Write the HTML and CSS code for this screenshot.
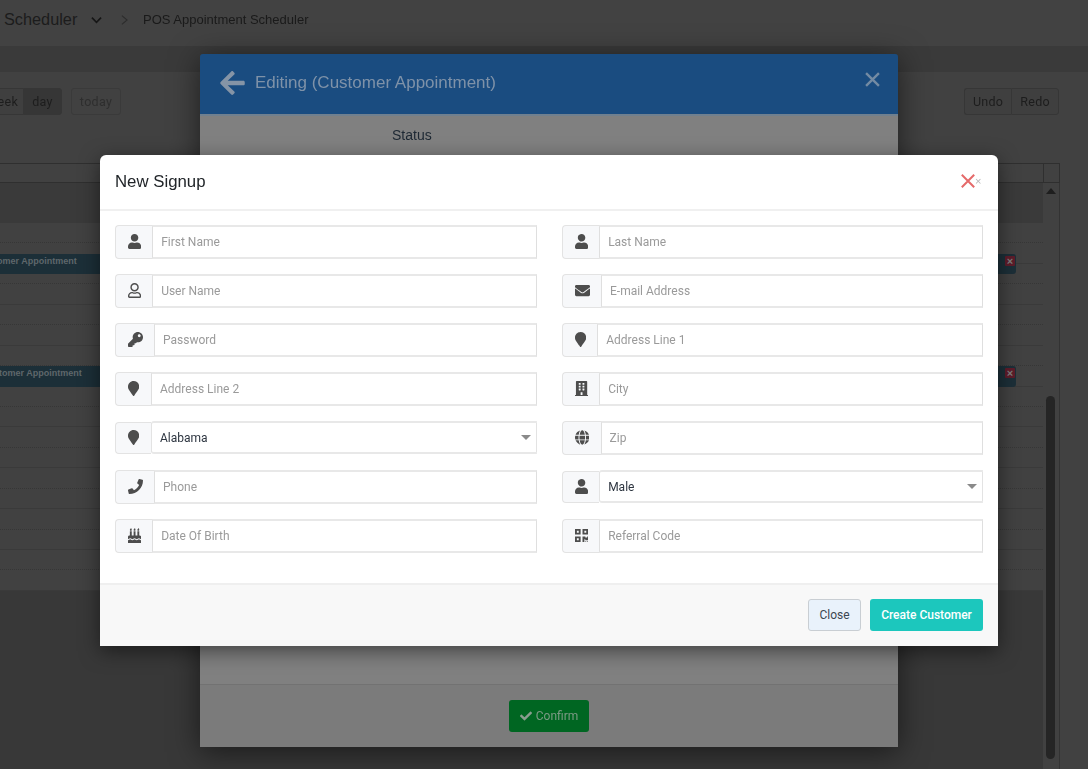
FILE: index.html
```html
<!DOCTYPE html>
<html lang="en">
<head>
<meta charset="utf-8">
<title>POS Appointment Scheduler</title>
<link rel="stylesheet" href="styles.css">
</head>
<body>
<svg class="defs" aria-hidden="true">
  <defs>
    <path id="i-user" d="M224 256c70.7 0 128-57.3 128-128S294.7 0 224 0 96 57.3 96 128s57.3 128 128 128zm89.6 32h-16.7c-22.2 10.2-46.9 16-72.9 16s-50.6-5.8-72.9-16h-16.7C60.2 288 0 348.2 0 422.4V464c0 26.5 21.5 48 48 48h352c26.5 0 48-21.5 48-48v-41.6c0-74.2-60.2-134.4-134.4-134.4z"/>
    <path id="i-user-o" d="M313.6 304c-28.7 0-42.5 16-89.6 16-47.1 0-60.8-16-89.6-16C60.2 304 0 364.2 0 438.4V464c0 26.5 21.5 48 48 48h352c26.5 0 48-21.5 48-48v-25.6c0-74.2-60.2-134.4-134.4-134.4zM400 464H48v-25.6c0-47.6 38.8-86.4 86.4-86.4 14.6 0 38.3 16 89.6 16 51.7 0 74.9-16 89.6-16 47.6 0 86.4 38.8 86.4 86.4V464zM224 288c79.5 0 144-64.5 144-144S303.5 0 224 0 80 64.5 80 144s64.5 144 144 144zm0-240c52.9 0 96 43.1 96 96s-43.1 96-96 96-96-43.1-96-96 43.1-96 96-96z"/>
    <path id="i-key" d="M512 176.001C512 273.203 433.202 352 336 352c-11.22 0-22.19-1.062-32.827-3.069l-24.012 27.014A23.999 23.999 0 0 1 261.223 384H224v40c0 13.255-10.745 24-24 24h-40v40c0 13.255-10.745 24-24 24H24c-13.255 0-24-10.745-24-24v-78.059c0-6.365 2.529-12.47 7.029-16.971l161.802-161.802C163.108 213.814 160 195.271 160 176 160 78.798 238.797.001 335.999 0 433.488-.001 512 78.511 512 176.001zM336 128c0 26.51 21.49 48 48 48s48-21.49 48-48-21.49-48-48-48-48 21.49-48 48z"/>
    <path id="i-pin" d="M172.268 501.67C26.97 291.031 0 269.413 0 192 0 85.961 85.961 0 192 0s192 85.961 192 192c0 77.413-26.97 99.031-172.268 309.67-9.535 13.774-29.93 13.773-39.464 0z"/>
    <path id="i-mail" d="M502.3 190.8c3.9-3.1 9.7-.2 9.7 4.7V400c0 26.5-21.5 48-48 48H48c-26.5 0-48-21.5-48-48V195.6c0-5 5.7-7.8 9.7-4.7 22.4 17.4 52.1 39.5 154.1 113.6 21.1 15.4 56.7 47.8 92.2 47.6 35.7.3 72-32.8 92.3-47.6 102-74.1 131.6-96.3 154-113.7zM256 320c23.2.4 56.6-29.2 73.4-41.4 132.7-96.3 142.8-104.7 173.4-128.7 5.8-4.5 9.2-11.5 9.2-18.9v-19c0-26.5-21.5-48-48-48H48C21.5 64 0 85.5 0 112v19c0 7.4 3.4 14.3 9.2 18.9 30.6 23.9 40.7 32.4 173.4 128.7 16.8 12.2 50.2 41.8 73.4 41.4z"/>
    <path id="i-building" d="M436 480h-20V24c0-13.255-10.745-24-24-24H56C42.745 0 32 10.745 32 24v456H12c-6.627 0-12 5.373-12 12v20h448v-20c0-6.627-5.373-12-12-12zM128 76c0-6.627 5.373-12 12-12h40c6.627 0 12 5.373 12 12v40c0 6.627-5.373 12-12 12h-40c-6.627 0-12-5.373-12-12V76zm0 96c0-6.627 5.373-12 12-12h40c6.627 0 12 5.373 12 12v40c0 6.627-5.373 12-12 12h-40c-6.627 0-12-5.373-12-12v-40zm52 148h-40c-6.627 0-12-5.373-12-12v-40c0-6.627 5.373-12 12-12h40c6.627 0 12 5.373 12 12v40c0 6.627-5.373 12-12 12zm76 160h-64v-84c0-6.627 5.373-12 12-12h40c6.627 0 12 5.373 12 12v84zm64-172c0 6.627-5.373 12-12 12h-40c-6.627 0-12-5.373-12-12v-40c0-6.627 5.373-12 12-12h40c6.627 0 12 5.373 12 12v40zm0-96c0 6.627-5.373 12-12 12h-40c-6.627 0-12-5.373-12-12v-40c0-6.627 5.373-12 12-12h40c6.627 0 12 5.373 12 12v40zm0-96c0 6.627-5.373 12-12 12h-40c-6.627 0-12-5.373-12-12V76c0-6.627 5.373-12 12-12h40c6.627 0 12 5.373 12 12v40z"/>
    <path id="i-globe" d="M336.5 160C322 70.7 287.8 8 248 8s-74 62.7-88.5 152h177zM152 256c0 22.2 1.2 43.5 3.3 64h185.3c2.1-20.5 3.3-41.8 3.3-64s-1.2-43.5-3.3-64H155.3c-2.1 20.5-3.3 41.8-3.3 64zm324.7-96c-28.6-67.9-86.5-120.4-158-141.6 24.4 33.8 41.2 84.7 50 141.6h108zM177.2 18.4C105.8 39.6 47.8 92.1 19.3 160h108c8.7-56.9 25.5-107.8 49.9-141.6zM487.4 192H372.7c2.1 21 3.3 42.5 3.3 64s-1.2 43-3.3 64h114.6c5.5-20.5 8.6-41.8 8.6-64s-3.1-43.5-8.5-64zM120 256c0-21.5 1.2-43 3.3-64H8.6C3.2 212.5 0 233.8 0 256s3.2 43.5 8.6 64h114.6c-2-21-3.2-42.5-3.2-64zm39.5 96c14.5 89.3 48.7 152 88.5 152s74-62.7 88.5-152h-177zm159.3 141.6c71.4-21.2 129.4-73.7 158-141.6h-108c-8.8 56.9-25.6 107.8-50 141.6zM19.3 352c28.6 67.9 86.5 120.4 158 141.6-24.4-33.8-41.2-84.7-50-141.6h-108z"/>
    <path id="i-phone" d="M493.4 24.6l-104-24c-11.3-2.6-22.9 3.3-27.5 13.9l-48 112c-4.2 9.8-1.4 21.3 6.9 28l60.6 49.6c-36 76.7-98.9 140.5-177.2 177.2l-49.6-60.6c-6.8-8.3-18.2-11.1-28-6.9l-112 48C3.9 366.5-2 378.1.6 389.4l24 104C27.1 504.2 36.7 512 48 512c256.1 0 464-207.5 464-464 0-11.2-7.7-20.9-18.6-23.4z"/>
    <path id="i-cake" d="M448 384c-28.02 0-31.26-32-74.5-32-43.43 0-46.825 32-74.75 32-27.695 0-31.454-32-74.75-32-42.842 0-47.218 32-74.5 32-28.148 0-31.202-32-74.75-32-43.547 0-46.653 32-74.75 32v-80c0-26.5 21.5-48 48-48h16V112h64v144h64V112h64v144h64V112h64v144h16c26.5 0 48 21.5 48 48v80zm0 128H0v-96c43.356 0 46.767-32 74.75-32 27.951 0 31.253 32 74.75 32 42.843 0 47.217-32 74.5-32 28.148 0 31.201 32 74.75 32 43.357 0 46.767-32 74.75-32 27.488 0 31.252 32 74.5 32v96zM96 96c-17.75 0-32-14.25-32-32 0-31 32-23 32-64 12 0 32 29.5 32 56s-14.25 40-32 40zm128 0c-17.75 0-32-14.25-32-32 0-31 32-23 32-64 12 0 32 29.5 32 56s-14.25 40-32 40zm128 0c-17.75 0-32-14.25-32-32 0-31 32-23 32-64 12 0 32 29.5 32 56s-14.25 40-32 40z"/>
    <path id="i-qr" d="M0 224h192V32H0v192zM64 96h64v64H64V96zm192-64v192h192V32H256zm128 128h-64V96h64v64zM0 480h192V288H0v192zm64-128h64v64H64v-64zm352-64h32v128h-96v-32h-32v96h-64V288h96v32h64v-32zm0 160h32v32h-32v-32zm-64 0h32v32h-32v-32z"/>
  </defs>
</svg>

<div class="page">
  <header class="topbar">
    <span class="app-name">Scheduler</span>
    <svg class="chev" viewBox="0 0 12 8"><path d="M1 1.5 6 6.5 11 1.5"/></svg>
    <svg class="crumb-sep" viewBox="0 0 8 12"><path d="M1 1 7 6 1 11"/></svg>
    <span class="crumb">POS Appointment Scheduler</span>
  </header>
  <div class="subbar"></div>
  <div class="toolbar">
    <div class="tools-left">
      <div class="btn-group week-group">
        <button class="tool-btn clip-week">week</button>
        <button class="tool-btn active">day</button>
      </div>
      <button class="tool-btn muted">today</button>
    </div>
    <div class="btn-group">
      <button class="tool-btn">Undo</button>
      <button class="tool-btn">Redo</button>
    </div>
  </div>
  <div class="cal">
    <div class="cal-head"><div class="cal-head-main"></div><div class="cal-head-corner"></div></div>
    <div class="cal-main">
      <div class="cal-grid">
        <div class="cal-band"></div>
        <div class="cal-rows">
          <div class="slot"></div><div class="slot"></div><div class="slot"></div><div class="slot"></div><div class="slot"></div><div class="slot"></div>
          <div class="slot"></div><div class="slot"></div><div class="slot"></div><div class="slot"></div><div class="slot"></div><div class="slot"></div>
          <div class="slot"></div><div class="slot"></div><div class="slot"></div><div class="slot"></div><div class="slot"></div><div class="slot"></div>
          <div class="event event-a"><span>Customer Appointment</span><i class="event-x">×</i></div>
          <div class="event event-b"><span>Customer Appointment</span><i class="event-x">×</i></div>
        </div>
        <div class="cal-foot"></div>
      </div>
      <div class="cal-scroll">
        <div class="scroll-up"></div>
        <div class="scroll-thumb"></div>
      </div>
    </div>
  </div>
</div>

<section class="edit-modal">
  <div class="edit-head">
    <svg class="edit-back" viewBox="0 0 448 512"><path d="M257.5 445.1l-22.2 22.2c-9.4 9.4-24.6 9.4-33.9 0L7 273c-9.4-9.4-9.4-24.6 0-33.9L201.4 44.7c9.4-9.4 24.6-9.4 33.9 0l22.2 22.2c9.5 9.5 9.3 25-.4 34.3L136.6 216H424c13.3 0 24 10.7 24 24v32c0 13.3-10.7 24-24 24H136.6l120.5 114.8c9.8 9.3 10 24.8.4 34.3z"/></svg>
    <h2 class="edit-title">Editing (Customer Appointment)</h2>
    <svg class="edit-close" viewBox="0 0 14 14"><path d="M1 1 13 13M13 1 1 13"/></svg>
  </div>
  <div class="edit-body"><span class="edit-label">Status</span></div>
  <div class="edit-foot">
    <button class="confirm">
      <svg viewBox="0 0 512 512"><path d="M173.898 439.404l-166.4-166.4c-9.997-9.997-9.997-26.206 0-36.204l36.203-36.204c9.997-9.998 26.207-9.998 36.204 0L192 312.69 432.095 72.596c9.997-9.997 26.207-9.997 36.204 0l36.203 36.204c9.997 9.997 9.997 26.206 0 36.204l-294.4 294.401c-9.998 9.997-26.207 9.997-36.204-.001z"/></svg>
      Confirm
    </button>
  </div>
</section>

<section class="signup-modal">
  <div class="signup-head">
    <h2 class="signup-title">New Signup</h2>
    <div class="signup-close">
      <svg viewBox="0 0 14 14"><path d="M.8.8 13.2 13.2M13.2.8.8 13.2"/></svg>
      <span class="close-x">×</span>
    </div>
  </div>
  <form class="signup-body">
    <div class="field"><span class="addon"><svg viewBox="0 0 448 512"><use href="#i-user"/></svg></span><input placeholder="First Name"></div>
    <div class="field"><span class="addon"><svg viewBox="0 0 448 512"><use href="#i-user"/></svg></span><input placeholder="Last Name"></div>
    <div class="field"><span class="addon"><svg viewBox="0 0 448 512"><use href="#i-user-o"/></svg></span><input placeholder="User Name"></div>
    <div class="field"><span class="addon"><svg viewBox="0 0 512 512"><use href="#i-mail"/></svg></span><input placeholder="E-mail Address"></div>
    <div class="field"><span class="addon"><svg viewBox="0 0 512 512"><use href="#i-key"/></svg></span><input placeholder="Password"></div>
    <div class="field"><span class="addon"><svg viewBox="0 0 384 512"><use href="#i-pin"/></svg></span><input placeholder="Address Line 1"></div>
    <div class="field"><span class="addon addon-wide"><svg viewBox="0 0 384 512"><use href="#i-pin"/></svg></span><input placeholder="Address Line 2"></div>
    <div class="field"><span class="addon"><svg viewBox="0 0 448 512"><use href="#i-building"/></svg></span><input placeholder="City"></div>
    <div class="field field-select"><span class="addon addon-wide"><svg viewBox="0 0 384 512"><use href="#i-pin"/></svg></span><div class="select-wrap"><select><option>Alabama</option></select></div></div>
    <div class="field"><span class="addon"><svg viewBox="0 0 496 512"><use href="#i-globe"/></svg></span><input placeholder="Zip"></div>
    <div class="field"><span class="addon"><svg viewBox="0 0 512 512"><use href="#i-phone"/></svg></span><input placeholder="Phone"></div>
    <div class="field field-select"><span class="addon"><svg viewBox="0 0 448 512"><use href="#i-user"/></svg></span><div class="select-wrap"><select><option>Male</option></select></div></div>
    <div class="field"><span class="addon"><svg viewBox="0 0 448 512"><use href="#i-cake"/></svg></span><input placeholder="Date Of Birth"></div>
    <div class="field"><span class="addon"><svg viewBox="0 0 448 512"><use href="#i-qr"/></svg></span><input placeholder="Referral Code"></div>
  </form>
  <div class="signup-foot">
    <button class="btn-close">Close</button>
    <button class="btn-create">Create Customer</button>
  </div>
</section>
</body>
</html>
```

FILE: styles.css
```css
* { box-sizing: border-box; }
html, body { margin: 0; height: 100%; overflow: hidden; }
body { background: #414141; font-family: Roboto, "Liberation Sans", sans-serif; color: #222; }
.defs { display: none; }
button { font-family: inherit; }

/* Dimmed page behind the dialogs */
.page { height: 769px; display: flex; flex-direction: column; overflow: hidden; filter: blur(.5px); }
.topbar { height: 46px; display: flex; align-items: center; padding-left: 4px; background: #424242; flex: none; padding-bottom: 7px; }
.app-name { font-family: "Liberation Sans", sans-serif; font-size: 16.3px; color: #1c1c1c; width: 87px; }
.chev { width: 11px; height: 8px; fill: none; stroke: #161616; stroke-width: 1.8; }
.crumb-sep { width: 7px; height: 12px; margin-left: 19px; fill: none; stroke: #2c2c2c; stroke-width: 1.2; }
.crumb { margin-left: 15px; font-family: "Liberation Sans", sans-serif; font-size: 13px; color: #1a1a1a; }
.subbar { height: 26px; background: #3a3a3a; flex: none; }
.toolbar { height: 91px; flex: none; display: flex; justify-content: space-between; align-items: flex-start; padding: 16px 29px 0 0; }
.tools-left { display: flex; gap: 9px; margin-left: -21px; }
.btn-group { display: flex; }
.tool-btn { height: 27px; padding: 0 8px; border: 1px solid #363636; background: #3f3f3f; color: #1d1d1d; font-size: 12.5px; letter-spacing: .3px; border-radius: 3px; }
.btn-group .tool-btn:not(:last-child) { border-top-right-radius: 0; border-bottom-right-radius: 0; border-right: 0; }
.btn-group .tool-btn:not(:first-child) { border-top-left-radius: 0; border-bottom-left-radius: 0; }
.tool-btn.active { background: #363636; width: 39px; padding: 0; }
.clip-week { width: 44px; padding: 0 0 0 3px; }
.tool-btn.muted { color: #2e2e2e; background: #414141; width: 50px; padding: 0; border-color: #3a3a3a; }

.cal { flex: 1; display: flex; flex-direction: column; width: 1060px; min-height: 0; }
.cal-head { height: 20px; flex: none; display: flex; border-top: 1px solid #2f2f2f; border-bottom: 1px solid #2f2f2f; }
.cal-head-main { flex: 1; }
.cal-head-corner { width: 17px; border-left: 1px solid #2f2f2f; border-right: 1px solid #2f2f2f; }
.cal-main { flex: 1; display: flex; min-height: 0; }
.cal-grid { flex: 1; display: flex; flex-direction: column; min-width: 0; }
.cal-band { height: 40px; background: #3a3a3a; flex: none; }
.cal-rows { position: relative; flex: none; }
.slot { height: 20.45px; }
.slot:nth-child(odd) { border-bottom: 1px dotted #363636; }
.slot:nth-child(even) { border-bottom: 1px solid #3a3a3a; }
.cal-foot { flex: 1; background: #383838; }
.cal-scroll { width: 17px; flex: none; border-right: 1px solid #333; padding: 5px 0 0 3px; }
.scroll-up { width: 0; height: 0; border: 5px solid transparent; border-top: 0; border-bottom: 6px solid #1e1e1e; }
.scroll-thumb { width: 9px; height: 363px; margin-top: 202px; border-radius: 5px; background: #252525; }
.event { position: absolute; left: -30px; right: 27px; height: 20px; display: flex; justify-content: space-between; background: #1c2f38; border-radius: 3px; padding: 0 1px 0 7px; }
.event span { font: bold 9px/14px "Liberation Sans", sans-serif; color: #5f676b; }
.event-a { top: 31px; }
.event-b { top: 143px; height: 21px; left: -25px; }
.event-x { width: 10px; height: 10px; margin-top: 2px; background: #5e1c2a; border-radius: 1px; color: #7d7d7d; font: bold 11px/10px "Liberation Sans", sans-serif; text-align: center; }

/* Editing dialog */
.edit-modal { position: absolute; left: 200px; top: 54px; width: 698px; height: 693px; display: flex; flex-direction: column; box-shadow: 0 5px 30px rgba(0,0,0,.55); border-radius: 3px 3px 0 0; }
.edit-head { height: 62px; flex: none; display: flex; align-items: center; padding: 0 18px 2px 20px; background: #1a4c80; border-bottom: 2px solid #70808f; border-radius: 3px 3px 0 0; }
.edit-back { height: 28px; fill: #8594a6; flex: none; width: 25px; filter: blur(.4px); }
.edit-title { flex: 1; margin: 0 0 0 10px; font: 400 17px "Liberation Sans", sans-serif; color: #7f92a8; filter: blur(.4px); }
.edit-close { width: 15px; height: 15px; margin-top: -8px; fill: none; stroke: #748ba3; stroke-width: 2.2; filter: blur(.4px); }
.edit-body { flex: 1; background: #808080; padding: 11px 0 0 192px; line-height: 1; }
.edit-label { font: 14px/1 "Liberation Sans", sans-serif; color: #1d2833; filter: blur(.4px); display: inline-block; }
.edit-foot { height: 63px; flex: none; background: #7b7b7b; border-top: 1px solid #727272; display: flex; justify-content: center; padding-top: 15px; }
.confirm { width: 80px; height: 32px; border: 0; border-radius: 3px; background: #006622; color: #7b9a85; font-size: 12px; display: flex; align-items: center; justify-content: center; gap: 4px; padding: 0; filter: blur(.3px); }
.confirm svg { width: 12px; height: 12px; fill: #8a9d90; }

/* New Signup dialog */
.signup-modal { position: absolute; left: 100px; top: 155px; width: 898px; height: 491px; display: flex; flex-direction: column; background: #fff; border-radius: 6px 6px 0 0; box-shadow: 0 5px 20px rgba(0,0,0,.5); }
.signup-head { height: 56px; flex: none; display: flex; align-items: center; justify-content: space-between; padding: 0 17px 0 15px; border-bottom: 2px solid #f0f0f0; }
.signup-title { margin: 0; font: 400 16.8px "Liberation Sans", sans-serif; color: #212529; }
.signup-close { display: flex; align-items: center; margin-top: -2px; }
.signup-close svg { width: 14px; height: 14px; fill: none; stroke: #e56a6a; stroke-width: 2; }
.close-x { width: 6px; font: 11px/14px "Liberation Sans", sans-serif; color: #b5b5b5; }
.signup-body { flex: 1; display: grid; grid-template-columns: 422px 421px; column-gap: 25px; row-gap: 15px; align-content: start; padding: 14px 15px 0; }
.field { display: flex; height: 34px; min-width: 0; }
.addon { flex: none; display: flex; align-items: center; padding: 0 11.5px; background: #f7f8fa; border: 1px solid #e3e3e3; border-right: 0; border-radius: 4px 0 0 4px; }
.addon-wide { padding-right: 12.25px; }
.addon svg { height: 15px; width: auto; display: block; fill: #4d4d4d; margin-top: -1px; }
.field input { flex: 1; min-width: 0; height: 34px; border: 1px solid #dfdfdf; border-top: 2px solid #e8e8e8; border-bottom: 2px solid #e8e8e8; padding: 0 8px; font: 12px Roboto, sans-serif; color: #333; background: #fff; border-radius: 0; outline: 0; }
.field input::placeholder { color: #9a9a9a; opacity: 1; }
.field-select .addon { height: 32px; margin-top: 1px; }
.select-wrap { flex: 1; position: relative; min-width: 0; }
.select-wrap::after { content: ""; position: absolute; right: 6px; top: 14px; border: 5px solid transparent; border-top: 5px solid #8a8a8a; border-bottom: 0; }
.select-wrap select { width: 100%; height: 33px; display: block; appearance: none; border: 1px solid #e3e3e3; border-top: 2px solid #e8e8e8; border-bottom: 2px solid #e8e8e8; border-radius: 3px 0 0 3px; background: #fff; padding: 1px 8px 0; font: 12px Roboto, sans-serif; color: #2d3540; outline: 0; }
.signup-foot { height: 63px; flex: none; display: flex; justify-content: flex-end; gap: 9px; padding: 14px 15px 0; background: #f8f8f8; border-top: 2px solid #efefef; }
.btn-close, .btn-create { height: 32px; border-radius: 3px; font-size: 12px; }
.btn-close { width: 53px; padding: 0; background: #e9f2fb; border: 1px solid #c9ced3; color: #3c4650; }
.btn-create { width: 113px; padding: 0; background: #1cc7bd; border: 0; color: #fff; font-weight: 500; }
```
